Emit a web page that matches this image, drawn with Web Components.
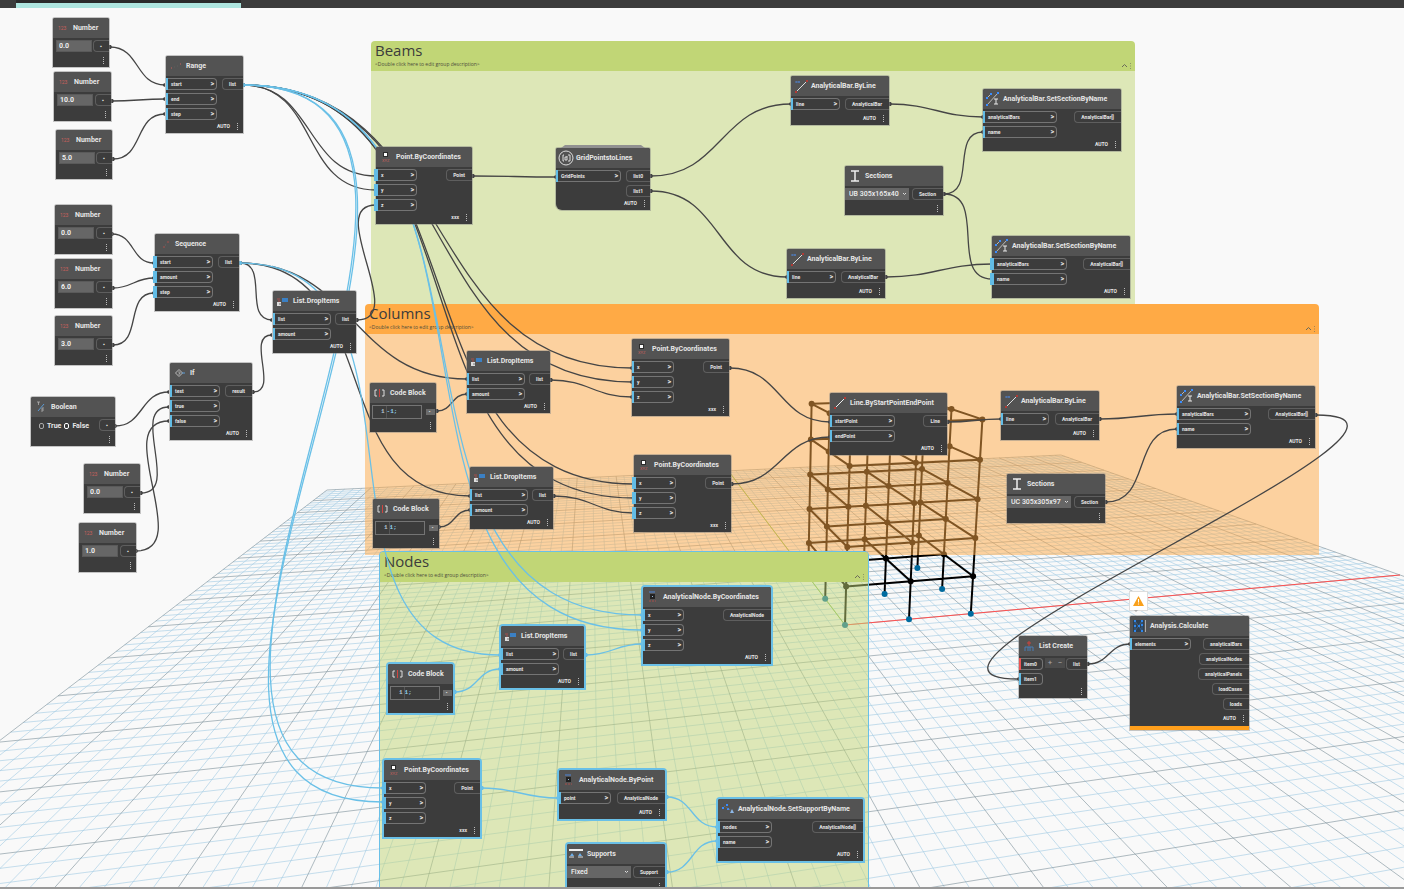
<!DOCTYPE html>
<html lang="en">
<head>
<meta charset="utf-8">
<title>Analysis graph</title>
<style>
  html, body { height: 100%; margin: 0; }
  body { background: #f9f9f9; font-family: Roboto, "Open Sans", sans-serif; overflow: hidden; }
</style>
</head>
<body>

<graph-app>
  <scene-view slot="scene"></scene-view>

  <node-group heading="Beams" style="left:371px;top:41px;width:764px;height:263px"></node-group>
  <node-group heading="Columns" style="left:365px;top:304px;width:954px;height:251px;--tint:#ffaa45;--fill:#ffaa4580"></node-group>
  <node-group heading="Nodes" selected style="left:379px;top:551px;width:490px;height:345px"></node-group>

  <wire-layer></wire-layer>

  <!-- inputs -->
  <flow-node heading="Number" icon="number" style="left:53px;top:18px;width:56px"><number-box slot="in" value="0.0"></number-box><out-port slot="out">▪</out-port></flow-node>
  <flow-node heading="Number" icon="number" style="left:54px;top:72px;width:57px"><number-box slot="in" value="10.0"></number-box><out-port slot="out">▪</out-port></flow-node>
  <flow-node heading="Number" icon="number" style="left:56px;top:130px;width:56px"><number-box slot="in" value="5.0"></number-box><out-port slot="out">▪</out-port></flow-node>
  <flow-node heading="Number" icon="number" style="left:55px;top:205px;width:57px"><number-box slot="in" value="0.0"></number-box><out-port slot="out">▪</out-port></flow-node>
  <flow-node heading="Number" icon="number" style="left:55px;top:259px;width:57px"><number-box slot="in" value="6.0"></number-box><out-port slot="out">▪</out-port></flow-node>
  <flow-node heading="Number" icon="number" style="left:55px;top:316px;width:57px"><number-box slot="in" value="3.0"></number-box><out-port slot="out">▪</out-port></flow-node>
  <flow-node heading="Number" icon="number" style="left:84px;top:464px;width:56px"><number-box slot="in" value="0.0"></number-box><out-port slot="out">▪</out-port></flow-node>
  <flow-node heading="Number" icon="number" style="left:79px;top:523px;width:57px"><number-box slot="in" value="1.0"></number-box><out-port slot="out">▪</out-port></flow-node>
  <flow-node heading="Boolean" icon="bool" style="left:31px;top:397px;width:84px"><bool-box slot="in"></bool-box><out-port slot="out">▪</out-port></flow-node>

  <flow-node heading="Range" icon="range" lacing="AUTO" style="left:166px;top:56px;width:77px;--in:51px">
    <in-port slot="in" bar="split">start</in-port><in-port slot="in" bar="split">end</in-port><in-port slot="in" bar="split">step</in-port>
    <out-port slot="out">list</out-port>
  </flow-node>
  <flow-node heading="Sequence" icon="sequence" lacing="AUTO" style="left:155px;top:234px;width:84px;--in:58px">
    <in-port slot="in" bar="wide">start</in-port><in-port slot="in" bar="wide">amount</in-port><in-port slot="in" bar="wide">step</in-port>
    <out-port slot="out">list</out-port>
  </flow-node>
  <flow-node heading="List.DropItems" icon="drop" lacing="AUTO" style="left:273px;top:291px;width:83px;--in:58px">
    <in-port slot="in">list</in-port><in-port slot="in">amount</in-port>
    <out-port slot="out">list</out-port>
  </flow-node>
  <flow-node heading="If" icon="if" lacing="AUTO" style="left:170px;top:363px;width:82px;--in:50px">
    <in-port slot="in">test</in-port><in-port slot="in">true</in-port><in-port slot="in">false</in-port>
    <out-port slot="out">result</out-port>
  </flow-node>

  <!-- beams -->
  <flow-node heading="Point.ByCoordinates" icon="point" lacing="xxx" style="left:376px;top:147px;width:96px;--in:41px">
    <in-port slot="in" bar="wide">x</in-port><in-port slot="in" bar="wide">y</in-port><in-port slot="in" bar="wide">z</in-port>
    <out-port slot="out">Point</out-port>
  </flow-node>
  <flow-node heading="GridPointstoLines" icon="custom" lacing="AUTO" custom style="left:556px;top:148px;width:94px;--in:65px">
    <in-port slot="in">GridPoints</in-port>
    <out-port slot="out">list0</out-port><out-port slot="out">list1</out-port>
  </flow-node>
  <flow-node heading="AnalyticalBar.ByLine" icon="bar" lacing="AUTO" style="left:791px;top:76px;width:98px;--in:49px">
    <in-port slot="in">line</in-port><out-port slot="out">AnalyticalBar</out-port>
  </flow-node>
  <flow-node heading="AnalyticalBar.SetSectionByName" icon="setbar" lacing="AUTO" style="left:983px;top:89px;width:138px;--in:74px">
    <in-port slot="in">analyticalBars</in-port><in-port slot="in">name</in-port>
    <out-port slot="out">AnalyticalBar[]</out-port>
  </flow-node>
  <flow-node heading="Sections" icon="section" style="left:845px;top:166px;width:98px">
    <pick-box slot="in" label="Section" value="UB 305x165x40"></pick-box><out-port slot="out">Section</out-port>
  </flow-node>
  <flow-node heading="AnalyticalBar.ByLine" icon="bar" lacing="AUTO" style="left:787px;top:249px;width:98px;--in:49px">
    <in-port slot="in">line</in-port><out-port slot="out">AnalyticalBar</out-port>
  </flow-node>
  <flow-node heading="AnalyticalBar.SetSectionByName" icon="setbar" lacing="AUTO" style="left:992px;top:236px;width:138px;--in:75px">
    <in-port slot="in" bar="wide">analyticalBars</in-port><in-port slot="in" bar="wide">name</in-port>
    <out-port slot="out">AnalyticalBar[]</out-port>
  </flow-node>

  <!-- columns -->
  <flow-node heading="Code Block" icon="code" style="left:370px;top:383px;width:66px"><code-box slot="in" value="-1;"></code-box><out-port slot="out" small>▪</out-port></flow-node>
  <flow-node heading="Code Block" icon="code" style="left:373px;top:499px;width:66px"><code-box slot="in" value="1;"></code-box><out-port slot="out" small>▪</out-port></flow-node>
  <flow-node heading="List.DropItems" icon="drop" lacing="AUTO" style="left:467px;top:351px;width:83px;--in:58px">
    <in-port slot="in">list</in-port><in-port slot="in">amount</in-port><out-port slot="out">list</out-port>
  </flow-node>
  <flow-node heading="List.DropItems" icon="drop" lacing="AUTO" style="left:470px;top:467px;width:83px;--in:58px">
    <in-port slot="in">list</in-port><in-port slot="in">amount</in-port><out-port slot="out">list</out-port>
  </flow-node>
  <flow-node heading="Point.ByCoordinates" icon="point" lacing="xxx" style="left:632px;top:339px;width:97px;--in:42px">
    <in-port slot="in" bar="split">x</in-port><in-port slot="in" bar="split">y</in-port><in-port slot="in" bar="split">z</in-port>
    <out-port slot="out">Point</out-port>
  </flow-node>
  <flow-node heading="Point.ByCoordinates" icon="point" lacing="xxx" style="left:634px;top:455px;width:97px;--in:42px">
    <in-port slot="in" bar="wide">x</in-port><in-port slot="in" bar="wide">y</in-port><in-port slot="in" bar="wide">z</in-port>
    <out-port slot="out">Point</out-port>
  </flow-node>
  <flow-node heading="Line.ByStartPointEndPoint" icon="line" lacing="AUTO" style="left:830px;top:393px;width:117px;--in:65px">
    <in-port slot="in">startPoint</in-port><in-port slot="in">endPoint</in-port><out-port slot="out">Line</out-port>
  </flow-node>
  <flow-node heading="AnalyticalBar.ByLine" icon="bar" lacing="AUTO" style="left:1001px;top:391px;width:98px;--in:48px">
    <in-port slot="in">line</in-port><out-port slot="out">AnalyticalBar</out-port>
  </flow-node>
  <flow-node heading="AnalyticalBar.SetSectionByName" icon="setbar" lacing="AUTO" style="left:1177px;top:386px;width:138px;--in:74px">
    <in-port slot="in">analyticalBars</in-port><in-port slot="in">name</in-port>
    <out-port slot="out">AnalyticalBar[]</out-port>
  </flow-node>
  <flow-node heading="Sections" icon="section" style="left:1007px;top:474px;width:98px">
    <pick-box slot="in" label="Section" value="UC 305x305x97"></pick-box><out-port slot="out">Section</out-port>
  </flow-node>

  <!-- nodes and supports -->
  <flow-node selected heading="Code Block" icon="code" style="left:388px;top:664px;width:65px"><code-box slot="in" value="1;"></code-box><out-port slot="out" small>▪</out-port></flow-node>
  <flow-node selected heading="List.DropItems" icon="drop" lacing="AUTO" style="left:501px;top:626px;width:83px;--in:58px">
    <in-port slot="in">list</in-port><in-port slot="in">amount</in-port><out-port slot="out">list</out-port>
  </flow-node>
  <flow-node selected heading="AnalyticalNode.ByCoordinates" icon="anode" lacing="AUTO" style="left:643px;top:587px;width:128px;--in:41px">
    <in-port slot="in">x</in-port><in-port slot="in">y</in-port><in-port slot="in">z</in-port>
    <out-port slot="out">AnalyticalNode</out-port>
  </flow-node>
  <flow-node selected heading="Point.ByCoordinates" icon="point" lacing="xxx" style="left:384px;top:760px;width:96px;--in:42px">
    <in-port slot="in" bar="wide">x</in-port><in-port slot="in" bar="wide">y</in-port><in-port slot="in" bar="wide">z</in-port>
    <out-port slot="out">Point</out-port>
  </flow-node>
  <flow-node selected heading="AnalyticalNode.ByPoint" icon="anode" lacing="AUTO" style="left:559px;top:770px;width:106px;--in:52px">
    <in-port slot="in">point</in-port><out-port slot="out">AnalyticalNode</out-port>
  </flow-node>
  <flow-node selected heading="AnalyticalNode.SetSupportByName" icon="setsupport" lacing="AUTO" style="left:718px;top:799px;width:145px;--in:54px">
    <in-port slot="in">nodes</in-port><in-port slot="in">name</in-port><out-port slot="out">AnalyticalNode[]</out-port>
  </flow-node>
  <flow-node selected heading="Supports" icon="support" style="left:567px;top:844px;width:98px">
    <pick-box slot="in" label="Support" value="Fixed"></pick-box><out-port slot="out">Support</out-port>
  </flow-node>

  <!-- analysis -->
  <flow-node heading="List Create" icon="create" style="left:1019px;top:636px;width:68px;--in:24px">
    <in-port slot="in" plain bar="missing">item0</in-port><in-port slot="in" plain>item1</in-port>
    <step-buttons slot="mid"></step-buttons>
    <out-port slot="out">list</out-port>
  </flow-node>
  <flow-node heading="Analysis.Calculate" icon="calc" lacing="AUTO" warning style="left:1130px;top:616px;width:119px;--in:61px">
    <in-port slot="in">elements</in-port>
    <out-port slot="out">analyticalBars</out-port><out-port slot="out">analyticalNodes</out-port><out-port slot="out">analyticalPanels</out-port><out-port slot="out">loadCases</out-port><out-port slot="out">loads</out-port>
  </flow-node>
  <warning-flag style="left:1129px;top:591px"></warning-flag>
</graph-app>

<script>
// every element gets its markup from its own template
class BaseElement extends HTMLElement {
  constructor() {
    super();
    this.attachShadow({ mode: 'open' });
  }
  connectedCallback() {
    const template = document.createElement('template');
    template.innerHTML = this.getStyles() + this.getTemplate();
    this.shadowRoot.appendChild(template.content.cloneNode(true));
  }
  getStyles() { return ''; }
  getTemplate() { return ''; }
}

class GraphApp extends BaseElement {
  getStyles() {
    return `<style>
      :host { display: flex; flex-direction: column; height: 100vh; }
      nav { height: 8px; background: #3c3c3c; display: flex; padding-left: 16px; position: relative; z-index: 1; }
      .tab { width: 225px; box-sizing: border-box; background: #aee5df; border-top: 3px solid #2b2b2b; }
      main { flex: 1; position: relative; overflow: hidden; }
      /* the canvas origin lies under the tab strip */
      .plane { position: absolute; inset: -8px 0 0 0; }
      footer { height: 2px; background: #999; }
    </style>`;
  }
  getTemplate() {
    return `<nav><div class="tab"></div></nav>
      <main><div class="plane"><slot name="scene"></slot><slot></slot></div></main>
      <footer></footer>`;
  }
}

// 3D preview: ground grid, axes and the frame
class SceneView extends BaseElement {
  getStyles() {
    return `<style>
      :host { position: absolute; inset: 0; }
      svg { width: 100%; height: 100%; display: block; }
      path { fill: none; }
      .minor { stroke: #a3cbe4; stroke-opacity: .62; }
      .major { stroke: #84969f; stroke-opacity: .65; }
      .axis-x { stroke: #ff5050; }
      .axis-y { stroke: #8fc95a; }
      .bars { stroke: #000; stroke-width: 2; }
      .base { fill: #006b9f; }
    </style>`;
  }
  project(x, y, z = 0) {
    const w = 1 + 0.003457 * x + 0.016895 * y - 0.0031 * z;
    return [
      ((845 + 15.94 * x + 9.974 * y - 2.25 * z) / w).toFixed(1),
      ((625 + 0.9876 * x + 4.8724 * y - 14.7 * z) / w).toFixed(1)
    ];
  }
  line(a, b) {
    return `M${this.project(...a)}L${this.project(...b)}`;
  }
  getGrid() {
    let minor = '', major = '';
    for (let i = -50; i <= 50; i++) {
      // keep the near ends in front of the camera
      const near = Math.max(-50, (0.12 - 1 - 0.003457 * i) / 0.016895);
      const left = Math.max(-50, (0.12 - 1 - 0.016895 * i) / 0.003457);
      let d = this.line([i, near], [i, 50]);
      if (left < 50) d += this.line([left, i], [50, i]);
      if (i % 5) minor += d; else major += d;
    }
    return `<path class="minor" d="${minor}"/><path class="major" d="${major}"/>`;
  }
  getFrame() {
    const at = [0, 5, 10];
    let bars = '', joints = '', base = '';
    for (const a of at) for (const b of at) {
      bars += this.line([a, b, 0], [a, b, 15]);
      const [cx, cy] = this.project(a, b, 0);
      base += `<circle cx="${cx}" cy="${cy}" r="3"/>`;
    }
    for (let z = 3; z <= 15; z += 3) for (const a of at) {
      bars += this.line([0, a, z], [10, a, z]) + this.line([a, 0, z], [a, 10, z]);
      for (const b of at) {
        const [cx, cy] = this.project(a, b, z);
        joints += `<circle cx="${cx}" cy="${cy}" r="3"/>`;
      }
    }
    return `<path class="bars" d="${bars}"/><g>${joints}</g><g class="base">${base}</g>`;
  }
  getTemplate() {
    return `<svg>${this.getGrid()}
      <path class="axis-y" d="${this.line([0, 0], [0, 50])}"/>
      <path class="axis-x" d="${this.line([0, 0], [50, 0])}"/>
      ${this.getFrame()}</svg>`;
  }
}

class NodeGroup extends BaseElement {
  getStyles() {
    return `<style>
      :host { position: absolute; box-sizing: border-box; border-radius: 4px 4px 0 0; overflow: hidden;
        display: flex; flex-direction: column; --head: var(--tint, #c1d676); }
      :host([selected]) { border: 1px solid #6ac0e7; }
      header { background: var(--head); height: 30px; box-sizing: border-box; padding: 0 2px 0 4px;
        display: flex; justify-content: space-between; align-items: flex-end; }
      h2 { margin: 0; font: 400 15px/19px "Open Sans", sans-serif; color: #3c3c3c; }
      p { margin: 0; font: 400 5px/9px "Open Sans", sans-serif; color: #4c4c3c; padding-bottom: 2px; }
      .tools { padding-bottom: 1px; }
      .body { flex: 1; background: var(--fill, #c1d67680); }
    </style>`;
  }
  getTemplate() {
    return `<header>
        <div><h2>${this.getAttribute('heading')}</h2><p>&lt;Double click here to edit group description&gt;</p></div>
        <svg class="tools" width="12" height="8" fill="none" stroke="#6b6b5a"><path d="M1 5l2.500-2.500 2.500 2.500"/><path d="M9.500 1v6" stroke-dasharray="1 1.500" stroke-opacity=".6"/></svg>
      </header><div class="body"></div>`;
  }
}

const DARK = '#454545';
const BLUE = '#6ac0e7';
const WIRES = [
  [110, 47, 165, 85], [112, 101, 165, 99], [113, 159, 165, 114],
  [112, 234, 154, 263], [113, 288, 154, 278], [113, 345, 154, 293],
  [115, 426, 169, 392], [141, 493, 169, 407], [136, 551, 169, 421],
  [253, 392, 272, 335], [240, 263, 272, 320], [357, 320, 376, 205],
  [240, 263, 467, 379], [240, 263, 470, 496],
  [243, 85, 376, 176], [243, 85, 376, 190],
  [243, 85, 632, 368], [243, 85, 632, 382],
  [243, 85, 634, 484], [243, 85, 634, 498],
  [473, 176, 556, 177], [651, 176, 791, 104], [651, 191, 787, 277],
  [890, 104, 983, 117], [886, 277, 992, 264], [944, 194, 983, 132], [944, 194, 992, 279],
  [437, 411, 467, 394], [439, 527, 470, 510],
  [551, 380, 632, 397], [554, 496, 634, 513],
  [730, 368, 830, 422], [732, 484, 830, 437],
  [948, 422, 1001, 419], [1100, 419, 1177, 414], [1106, 502, 1177, 429],
  [1316, 415, 1019, 679], [1088, 664, 1130, 644],
  [243, 85, 642, 615, 1], [243, 85, 642, 630, 1],
  [243, 85, 383, 788, 1], [243, 85, 383, 802, 1],
  [240, 263, 500, 655, 1], [455, 692, 500, 669, 1], [586, 655, 642, 644, 1],
  [482, 788, 558, 798, 1], [667, 797, 717, 827, 1], [667, 872, 717, 841, 1]
];

class WireLayer extends BaseElement {
  getStyles() {
    return `<style>
      :host { position: absolute; inset: 0; }
      svg { width: 100%; height: 100%; display: block; fill: none; }
    </style>`;
  }
  getTemplate() {
    const wires = WIRES.map(([x0, y0, x1, y1, picked]) => {
      const bend = 0.45 * Math.hypot(x1 - x0, y1 - y0);
      const color = picked ? BLUE : DARK;
      return `<path stroke="${color}" d="M${x0} ${y0}C${x0 + bend} ${y0} ${x1 - bend} ${y1} ${x1} ${y1}"/>
        <path fill="${color}" d="M${x0 - 1} ${y0 - 2}h2l1 2-1 2h-2zM${x1 - 2} ${y1 - 1}l2-1v4l-2-1z"/>`;
    });
    return `<svg stroke-width="1.300">${wires.join('')}</svg>`;
  }
}

const ICONS = {
  number: '<text x="2" y="9" font-size="5" fill="#c9605c">123</text>',
  range: '<path d="M2 9h1M11 5h1" stroke="#c9605c"/><path d="M5 8h1M8 7h1" stroke="#5e5e5e"/>',
  sequence: '<path d="M5 10h2M9 5h2" stroke="#a9504c"/><path d="M7 8h1" stroke="#666"/>',
  drop: '<path d="M1 5h3M2 7h2" stroke="#a9504c"/><path d="M1 8h4v4H1z" fill="#ddd"/><path d="M3 10h2" stroke="#777"/><path d="M6 4h6v4H6z" fill="#3b80c4"/>',
  if: '<path d="M6 3.500L9.500 7 6 10.500 2.500 7z" stroke="#bbb" fill="none"/><path d="M5 6h2v1.500H6V9" stroke="#bbb" fill="none" stroke-width=".7"/><path d="M9 7h3" stroke="#5b9bd5"/>',
  bool: '<path d="M4 11L10 4" stroke="#5b9bd5"/><path d="M3 2h3M4.500 2v3M8 8h2M8 8v4M8 10h2" stroke="#bbb" stroke-width=".7" fill="none"/>',
  point: '<path d="M4 2h5v5H4z" fill="#2c2c2c"/><path d="M5 3h3v3H5z" fill="#fff"/><text x="3" y="12" font-size="4" fill="#c9605c">XYZ</text>',
  custom: '<circle cx="7" cy="7" r="7" stroke="#ddd" fill="none"/><path d="M5 4H4v6h1M9 4h2v6H9M8 6H6v3h2V5" stroke="#ddd" fill="none"/>',
  bar: '<path d="M2 3h4M2 2v2M5 2v2" stroke="#4f86d8" stroke-width=".8"/><path d="M2 13L13 2" stroke="#ddd"/><path d="M1 12h2v2H1zM12 1h2v2h-2z" fill="#b33a35"/>',
  line: '<path d="M2 12L12 2" stroke="#eee"/><path d="M1 11h2v2H1zM11 1h2v2h-2z" fill="#b33a35"/>',
  setbar: '<path d="M1 6L5 2M1 13L12 1" stroke="#bbb"/><path d="M0 5h2v2H0zM4 1h2v2H4zM0 12h2v2H0zM11 0h2v2h-2z" fill="#3a8dff"/><path d="M8 7h4M10 7v5M8 12h4" stroke="#e8e8e8"/>',
  section: '<path d="M3 2h8M7 2v10M3 12h8" stroke="#eee" stroke-width="1.500"/>',
  code: '<path d="M4 4H2v6h2M9 4h2v6H9" stroke="#ddd" fill="none"/><path d="M6.500 3v8" stroke="#d0443f"/>',
  anode: '<path d="M4 1v2M6 1v2M8 1v2" stroke="#4f86d8"/><path d="M4 4h5v5H4z" fill="#222"/><path d="M6 6h1v1H6z" fill="#9bd"/><path d="M3 11h7" stroke="#a9504c" stroke-dasharray="2 1"/>',
  setsupport: '<path d="M1 5h2v2H1zM5 2h2v2H5zM6 6h2v2H6z" fill="#3a8dff"/><path d="M3 4l8 5" stroke="#777" stroke-dasharray="1 1"/><path d="M9 11l2-4 2 4z" fill="#8db8e8"/>',
  support: '<path d="M-1 3h14" stroke="#eee" stroke-width="2"/><path d="M0 9l2-3 2 3zM8 9l2-3 2 3z" fill="#6fb0ea"/><path d="M-1 10h5M8 10h5" stroke="#ddd"/>',
  create: '<path d="M7 2v5M5 4h4" stroke="#d0443f"/><path d="M3 12V8h3v4M8 12V8h3v4M6 8h2" stroke="#4a7fb5" fill="none"/>',
  calc: '<path d="M0 1h11v12H0z" fill="#31404f"/><path d="M2 2l7 10M9 2L2 12M2 2v10M9 2v10" stroke="#3a6ea5" stroke-width=".7"/><path d="M1 1h2v2H1zM8 1h2v2H8zM1 11h2v2H1zM8 11h2v2H8zM5 6h2v2H5zM8 5h2v2H8zM1 6h2v2H1z" fill="#2f86ea"/><path d="M12.500 1v12" stroke="#aaa"/>'
};

class FlowNode extends BaseElement {
  getStyles() {
    return `<style>
      :host { position: absolute; display: flex; flex-direction: column; min-height: 49px; background: #3c3c3c;
        color: #e6e6e6; border-radius: 2px 2px 0 0; box-shadow: 0 0 0 1px rgba(130, 130, 130, .45); }
      :host([selected]) { box-shadow: 0 0 0 2px #6ac0e7; }
      :host([warning]) { border-bottom: 4px solid #ff9f1c; }
      :host([custom]) { border-radius: 2px 2px 0 6px; }
      .stack { display: none; }
      :host([custom]) .stack { display: block; position: absolute; left: 5px; right: 5px; top: -3px; height: 3px;
        background: #919191; clip-path: polygon(4px 0, calc(100% - 4px) 0, 100% 100%, 0 100%); }
      header { height: 20px; display: flex; align-items: center; gap: 3px; padding-left: 3px;
        background: #535353; border-radius: 2px 2px 0 0; }
      svg { width: 14px; height: 14px; flex: none; overflow: visible; }
      h3 { margin: 0; font: 700 7px/20px Roboto, sans-serif; white-space: nowrap; }
      .ports { display: flex; padding-top: 2px; }
      .col { display: flex; flex-direction: column; gap: 3px; }
      .out { margin-left: auto; align-items: flex-end; }
      footer { height: 13px; margin-top: auto; display: flex; justify-content: flex-end; align-items: center; gap: 7px;
        padding-right: 5px; font: 700 5px/13px Roboto, sans-serif; }
      :host([warning]) footer { height: 16px; }
      .more { width: 1px; height: 7px; background: repeating-linear-gradient(#bbb 0 1px, transparent 1px 2px); }
    </style>`;
  }
  getTemplate() {
    return `<div class="stack"></div>
      <header><svg viewBox="0 0 14 14">${ICONS[this.getAttribute('icon')]}</svg><h3>${this.getAttribute('heading')}</h3></header>
      <div class="ports">
        <div class="col"><slot name="in"></slot></div>
        <slot name="mid"></slot>
        <div class="col out"><slot name="out"></slot></div>
      </div>
      <footer><span>${this.getAttribute('lacing') || ''}</span><i class="more"></i></footer>`;
  }
}

class InPort extends BaseElement {
  getStyles() {
    return `<style>
      :host { display: flex; align-items: center; box-sizing: border-box; width: var(--in); height: 12px; position: relative;
        border: 1px solid #747474; border-left: 0; border-radius: 0 4px 4px 0; padding: 0 2px 0 5px;
        font: 700 5px/10px Roboto, sans-serif; }
      .bar { position: absolute; left: 0; top: -1px; width: 2px; height: 12px; background: #62bce6; }
      :host([bar=wide]) .bar { left: -2px; width: 4px; }
      :host([bar=split]) .bar { box-shadow: -2px 0 0 -1px #f9f9f9, -3px 0 0 -1px #62bce6; }
      :host([bar=missing]) .bar { background: #eb5555; }
      .more { margin-left: auto; font-size: 7px; }
      :host([plain]) .more { display: none; }
    </style>`;
  }
  getTemplate() {
    return `<i class="bar"></i><slot></slot><span class="more">&gt;</span>`;
  }
}

class OutPort extends BaseElement {
  getStyles() {
    return `<style>
      :host { display: block; box-sizing: border-box; height: 12px; border: 1px solid #5e5e5e; border-right: 0;
        border-radius: 4px 0 0 4px; padding: 0 7px 0 6px; font: 700 5px/10px Roboto, sans-serif; white-space: nowrap; }
      :host([small]) { height: 6px; width: 9px; margin: 4px 1px 0 0; padding: 0 3px; background: #6b6b6b; border: 0;
        border-radius: 0; font-size: 4px; line-height: 6px; }
    </style>`;
  }
  getTemplate() { return '<slot></slot>'; }
}

class NumberBox extends BaseElement {
  getStyles() {
    return `<style>
      :host { display: block; padding-left: 3px; }
      input { display: block; box-sizing: border-box; width: 36px; height: 12px; margin: 0; padding: 0 2px;
        border: 1px solid #5a5a5a; background: #666; color: #eee; font: 700 7px/10px Roboto, sans-serif; }
    </style>`;
  }
  getTemplate() {
    return `<input type="text" aria-label="Number" value="${this.getAttribute('value')}">`;
  }
}

class BoolBox extends BaseElement {
  getStyles() {
    return `<style>
      :host { display: flex; align-items: center; gap: 3px; height: 14px; padding-left: 8px; font: 700 7px/14px Roboto, sans-serif; }
      label { display: flex; align-items: center; gap: 3px; }
      input { appearance: none; box-sizing: border-box; width: 5px; height: 6px; margin: 0; border: 1px solid #aaa; border-radius: 2px; }
      input:checked { border-color: #fff; }
    </style>`;
  }
  getTemplate() {
    return `<label><input type="radio" name="v">True</label><label><input type="radio" name="v" checked>False</label>`;
  }
}

class PickBox extends BaseElement {
  getStyles() {
    return `<style>
      :host { display: flex; align-items: center; width: 64px; height: 12px; background: #666; position: relative; }
      select { appearance: none; width: 100%; height: 12px; margin: 0; padding: 0 0 0 4px; border: 0; background: none;
        color: #eee; font: 500 7px/12px Roboto, sans-serif; }
      svg { position: absolute; right: 2px; pointer-events: none; }
    </style>`;
  }
  getTemplate() {
    return `<select aria-label="${this.getAttribute('label')}"><option>${this.getAttribute('value')}</option></select>
      <svg width="5" height="4" fill="none" stroke="#ddd"><path d="M1 1l1.500 1.500L4 1"/></svg>`;
  }
}

class CodeBox extends BaseElement {
  getStyles() {
    return `<style>
      :host { display: flex; box-sizing: border-box; width: 50px; height: 14px; margin-left: 2px; padding-left: 8px;
        border: 1px solid #747474; color: #b4c4d0; font: 700 6px/12px "Liberation Mono", monospace; }
      span { padding-right: 1px; }
      input { width: 30px; height: 12px; margin: 0; padding: 0; border: 0; border-left: 1px solid #555; background: none;
        color: #8fd0f0; font: inherit; box-sizing: border-box; }
    </style>`;
  }
  getTemplate() {
    return `<span>1</span><input type="text" aria-label="Code" value="${this.getAttribute('value')}">`;
  }
}

class StepButtons extends BaseElement {
  getStyles() {
    return `<style>
      :host { display: flex; margin-left: 2px; height: 10px; }
      button { width: 10px; height: 10px; margin: 0; padding: 0; border: 0; background: #4c4c4c; color: #aaa; font: 400 8px/10px Roboto, sans-serif; }
    </style>`;
  }
  getTemplate() {
    return `<button aria-label="Add item">+</button><button aria-label="Remove item">−</button>`;
  }
}

class WarningFlag extends BaseElement {
  getStyles() {
    return `<style>
      :host { position: absolute; width: 19px; height: 20px; box-sizing: border-box; background: #fff; border: 1px solid #ddd;
        display: flex; align-items: center; justify-content: center; }
      i { position: absolute; left: 4px; bottom: -4px; border: 2px solid transparent; border-top-color: #aaa; }
    </style>`;
  }
  getTemplate() {
    return `<svg width="11" height="10"><path d="M5.500 0L11 10H0z" fill="#f9a01b"/><path d="M5.500 3v3.500M5.500 7.500v1" stroke="#fff"/></svg><i></i>`;
  }
}

customElements.define('graph-app', GraphApp);
customElements.define('scene-view', SceneView);
customElements.define('node-group', NodeGroup);
customElements.define('wire-layer', WireLayer);
customElements.define('flow-node', FlowNode);
customElements.define('in-port', InPort);
customElements.define('out-port', OutPort);
customElements.define('number-box', NumberBox);
customElements.define('bool-box', BoolBox);
customElements.define('pick-box', PickBox);
customElements.define('code-box', CodeBox);
customElements.define('step-buttons', StepButtons);
customElements.define('warning-flag', WarningFlag);
</script>
</body>
</html>
